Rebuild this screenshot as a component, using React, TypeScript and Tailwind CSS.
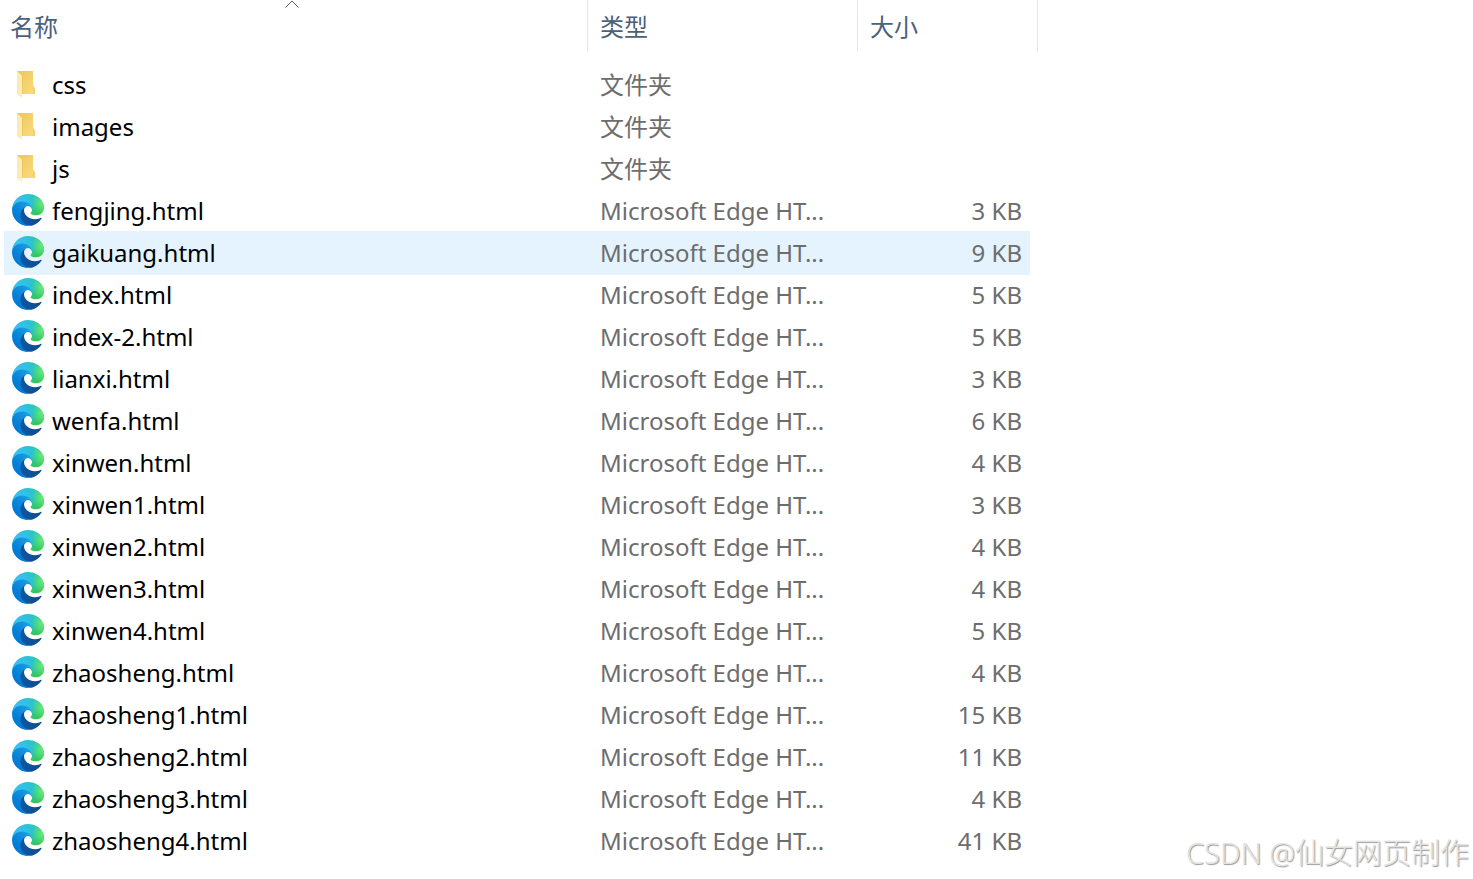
import React from 'react';

type Entry = { name: string; size?: string };

const entries: Entry[] = [
  { name: 'css' },
  { name: 'images' },
  { name: 'js' },
  { name: 'fengjing.html', size: '3 KB' },
  { name: 'gaikuang.html', size: '9 KB' },
  { name: 'index.html', size: '5 KB' },
  { name: 'index-2.html', size: '5 KB' },
  { name: 'lianxi.html', size: '3 KB' },
  { name: 'wenfa.html', size: '6 KB' },
  { name: 'xinwen.html', size: '4 KB' },
  { name: 'xinwen1.html', size: '3 KB' },
  { name: 'xinwen2.html', size: '4 KB' },
  { name: 'xinwen3.html', size: '4 KB' },
  { name: 'xinwen4.html', size: '5 KB' },
  { name: 'zhaosheng.html', size: '4 KB' },
  { name: 'zhaosheng1.html', size: '15 KB' },
  { name: 'zhaosheng2.html', size: '11 KB' },
  { name: 'zhaosheng3.html', size: '4 KB' },
  { name: 'zhaosheng4.html', size: '41 KB' },
];

const hovered = 'gaikuang.html';

// Gradients shared by every icon in the list
function IconGradients() {
  return (
    <svg className="absolute h-0 w-0" aria-hidden="true">
      <defs>
        <linearGradient id="edge-a" x1="63.33" x2="241.67" y1="181.97" y2="181.97" gradientUnits="userSpaceOnUse">
          <stop offset="0" stopColor="#0c59a4" />
          <stop offset="1" stopColor="#114a8b" />
        </linearGradient>
        <linearGradient id="edge-b" x1="157.35" x2="45.96" y1="104.61" y2="225.94" gradientUnits="userSpaceOnUse">
          <stop offset="0" stopColor="#1b9de2" />
          <stop offset=".16" stopColor="#1595df" />
          <stop offset=".67" stopColor="#0680d7" />
          <stop offset="1" stopColor="#0078d4" />
        </linearGradient>
        <radialGradient id="edge-c" cx="113.37" cy="570.21" r="202.43" gradientTransform="matrix(-.04 1 2.13 .08 -1179.54 -106.69)" gradientUnits="userSpaceOnUse">
          <stop offset="0" stopColor="#35c1f1" />
          <stop offset=".11" stopColor="#34c1ed" />
          <stop offset=".23" stopColor="#2fc2df" />
          <stop offset=".31" stopColor="#2bc3d2" />
          <stop offset=".67" stopColor="#36c752" />
        </radialGradient>
        <radialGradient id="edge-d" cx="376.52" cy="567.97" r="97.34" gradientTransform="matrix(.28 .96 .78 -.23 -303.76 -148.5)" gradientUnits="userSpaceOnUse">
          <stop offset="0" stopColor="#66eb6e" />
          <stop offset="1" stopColor="#66eb6e" stopOpacity="0" />
        </radialGradient>
        <linearGradient id="folder" x1="0" x2="1" y1="0" y2="1">
          <stop offset="0" stopColor="#edc65c" />
          <stop offset="1" stopColor="#fbdc7e" />
        </linearGradient>
        <linearGradient id="folder-flap" x1="0" x2="1" y1="0" y2="0">
          <stop offset="0" stopColor="#ffe9a9" />
          <stop offset="1" stopColor="#ffedb8" />
        </linearGradient>
      </defs>
    </svg>
  );
}

function EdgeIcon() {
  const wave =
    'M156.94 153.78c-.81 1.05-3.3 2.5-3.3 5.66 0 2.61 1.7 5.12 4.72 7.23 14.38 10 41.49 8.68 41.56 8.68a59.56 59.56 0 0 0 30.27-8.35 61.38 61.38 0 0 0 30.43-52.88c.26-22.41-8-37.31-11.34-43.91C228.09 28.76 182.35 4.92 132.61 4.92a128 128 0 0 0-128 126.2c.48-36.54 36.8-66.05 80-66.05 3.5 0 23.46.34 42 10.07 16.34 8.58 24.9 18.94 30.85 29.21 6.18 10.67 7.28 24.15 7.28 29.52s-2.74 13.33-7.8 19.91Z';
  return (
    <svg className="-mt-0.5 h-8 w-8 shrink-0" viewBox="4.6 4.9 256 256" aria-hidden="true">
      <path
        fill="url(#edge-a)"
        d="M235.68 195.46a93.73 93.73 0 0 1-10.54 4.71 101.87 101.87 0 0 1-35.9 6.46c-47.32 0-88.54-32.55-88.54-74.32A31.48 31.48 0 0 1 117.13 105c-42.8 1.8-53.8 46.4-53.8 72.53 0 73.88 68.09 81.37 82.76 81.37 7.91 0 19.84-2.3 27-4.56l1.31-.44a128.34 128.34 0 0 0 66.6-52.8 4 4 0 0 0-5.32-5.64Z"
      />
      <path
        fill="url(#edge-b)"
        d="M110.34 246.34A79.2 79.2 0 0 1 87.6 225a80.72 80.72 0 0 1 29.53-120c3.12-1.47 8.45-4.13 15.54-4a32.35 32.35 0 0 1 25.69 13 31.88 31.88 0 0 1 6.36 18.66c0-.21 24.46-79.6-80-79.6-43.9 0-80 41.66-80 78.21a130.15 130.15 0 0 0 12.11 56 128 128 0 0 0 156.38 67.11 75.55 75.55 0 0 1-62.78-8Z"
      />
      <path fill="url(#edge-c)" d={wave} />
      <path fill="url(#edge-d)" d={wave} />
    </svg>
  );
}

function FolderIcon() {
  return (
    <svg className="-mt-0.5 h-8 w-8 shrink-0" viewBox="0 0 32 32" aria-hidden="true">
      <path fill="url(#folder)" d="M5 3h16v14l2 4v5H5z" />
      <path fill="#e3b44c" d="M21 17l2 4v5h-2z" opacity=".25" />
      <path fill="url(#folder-flap)" d="M5 3l5 5v22l-5-4z" />
      <path fill="#e8c15c" d="M10 8h1v18h-1z" opacity=".5" />
    </svg>
  );
}

export default function FileList() {
  return (
    <div className="relative min-h-screen overflow-hidden bg-white font-['Noto_Sans','Noto_Sans_CJK_SC',sans-serif] text-2xl leading-8">
      <IconGradients />
      <table className="w-[1038px] table-fixed border-separate border-spacing-0 text-left">
        <colgroup>
          <col className="w-1" />
          <col className="w-[584px]" />
          <col className="w-[270px]" />
          <col className="w-[172px]" />
          <col className="w-2" />
        </colgroup>
        <thead className="text-[#4c607a]">
          <tr className="h-[51px]">
            <th colSpan={2} className="relative border-r border-[#e5e5e5] p-0 font-normal">
              <span className="absolute inset-x-0 top-0 flex justify-center pr-1">
                <svg className="h-2 w-4" viewBox="0 0 16 8" fill="none" stroke="#5a5a5a" aria-hidden="true">
                  <path d="M1.500 7.500L8 1l6.500 6.500" />
                </svg>
              </span>
              <button className="block w-full pt-0.5 pl-2.5 text-left">名称</button>
            </th>
            <th className="border-r border-[#e5e5e5] p-0 font-normal">
              <button className="block w-full pt-0.5 pl-3 text-left">类型</button>
            </th>
            <th colSpan={2} className="border-r border-[#e5e5e5] p-0 font-normal">
              <button className="block w-full pt-0.5 pl-3 text-left">大小</button>
            </th>
          </tr>
        </thead>
        <tbody className="text-[#6d6d6d]">
          <tr className="h-[13px]">
            <td colSpan={5} className="p-0" />
          </tr>
          {entries.map(entry => {
            const bg = entry.name === hovered ? 'bg-[#e5f3ff] shadow-[0_1px_#e5f3ff,0_-1px_#e5f3ff]' : '';
            return (
              <tr key={entry.name} className="h-[42px]">
                <td className="p-0" />
                <td className={`p-0 ${bg}`}>
                  <div className="flex items-center gap-2 pl-2 text-black">
                    {entry.size ? <EdgeIcon /> : <FolderIcon />}
                    {entry.name}
                  </div>
                </td>
                <td className={`p-0 pl-3 ${bg}`}>{entry.size ? 'Microsoft Edge HT...' : '文件夹'}</td>
                <td className={`p-0 pr-2 text-right ${bg}`}>{entry.size}</td>
                <td className="p-0" />
              </tr>
            );
          })}
        </tbody>
      </table>
      <span className="absolute right-1 bottom-2.5 text-[29px] font-light text-[#e2e2e2] [text-shadow:1px_1px_1px_#999]">
        CSDN @仙女网页制作
      </span>
    </div>
  );
}
